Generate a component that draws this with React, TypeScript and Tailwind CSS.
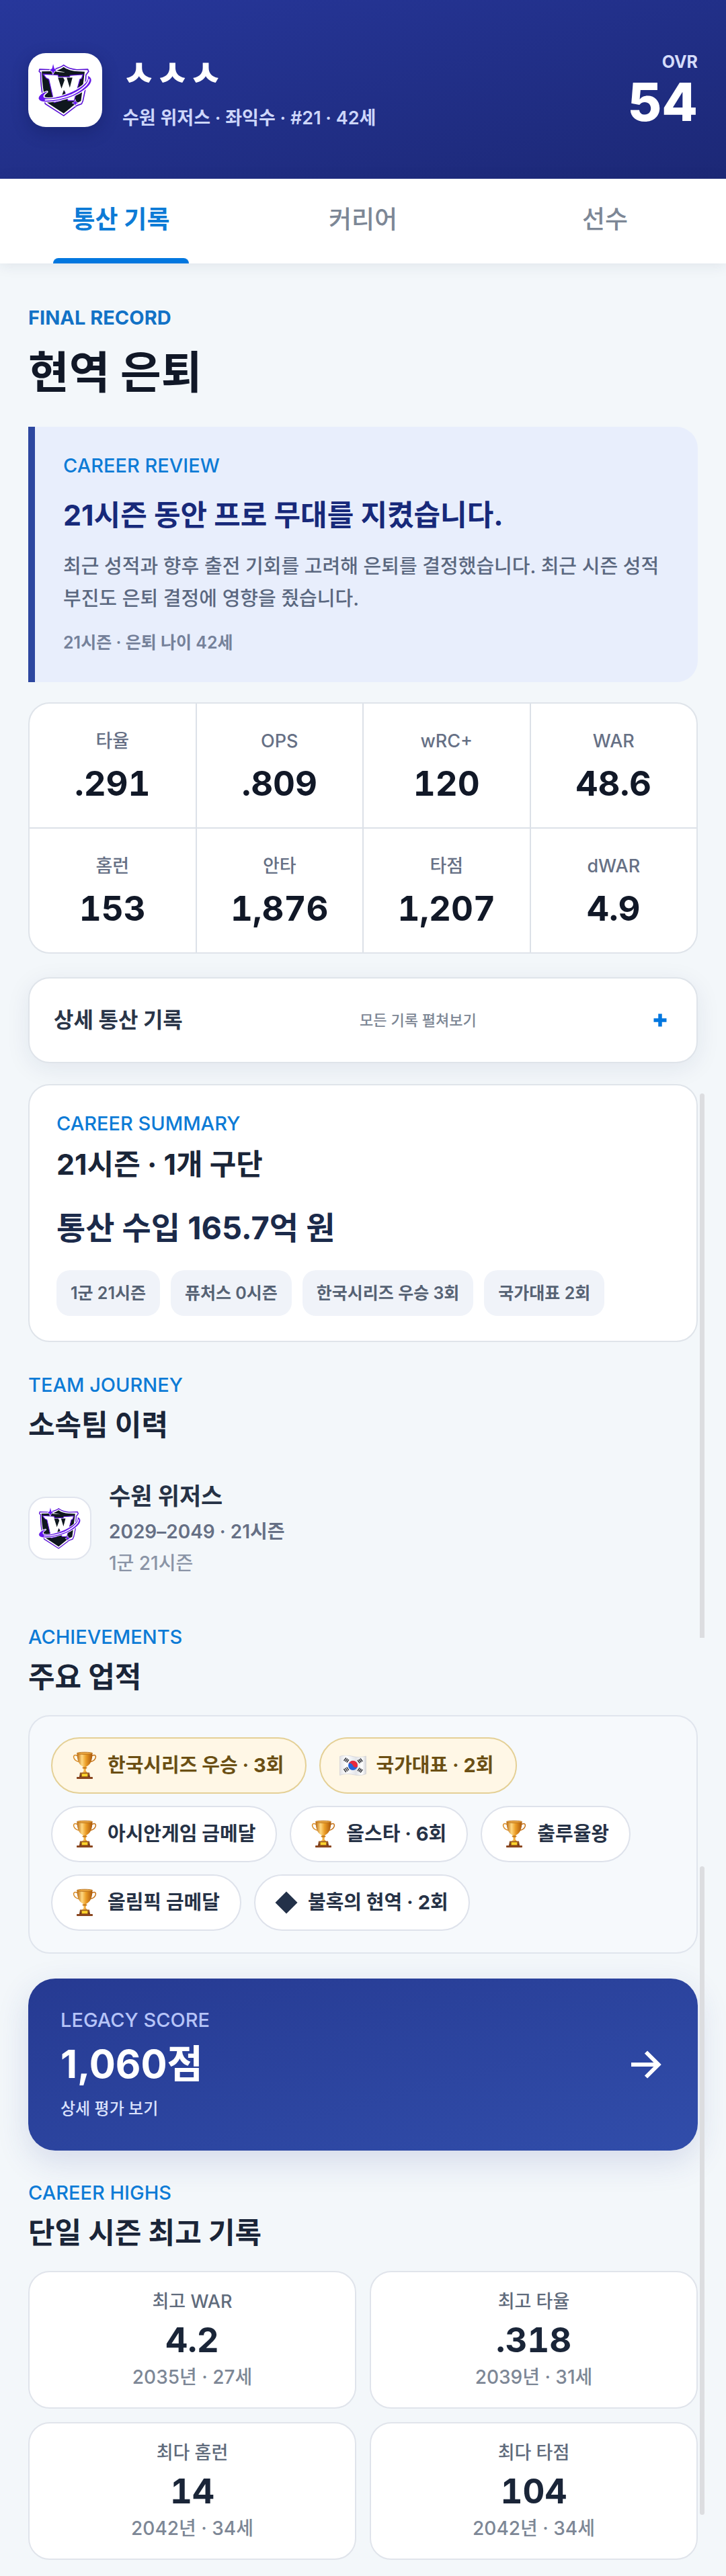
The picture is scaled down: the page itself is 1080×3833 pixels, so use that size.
import React from "react";

type Stat = { label: string; value: string };

const careerStats: Stat[] = [
  { label: "타율", value: ".291" },
  { label: "OPS", value: ".809" },
  { label: "wRC+", value: "120" },
  { label: "WAR", value: "48.6" },
  { label: "홈런", value: "153" },
  { label: "안타", value: "1,876" },
  { label: "타점", value: "1,207" },
  { label: "dWAR", value: "4.9" },
];

const summaryChips = ["1군 21시즌", "퓨처스 0시즌", "한국시리즈 우승 3회", "국가대표 2회"];

const careerHighs = [
  { label: "최고 WAR", value: "4.2", when: "2035년 · 27세" },
  { label: "최고 타율", value: ".318", when: "2039년 · 31세" },
  { label: "최다 홈런", value: "14", when: "2042년 · 34세" },
  { label: "최다 타점", value: "104", when: "2042년 · 34세" },
];

const achievements: { icon: "trophy" | "flag" | "diamond"; text: string; gold?: boolean }[] = [
  { icon: "trophy", text: "한국시리즈 우승 · 3회", gold: true },
  { icon: "flag", text: "국가대표 · 2회", gold: true },
  { icon: "trophy", text: "아시안게임 금메달" },
  { icon: "trophy", text: "올스타 · 6회" },
  { icon: "trophy", text: "출루율왕" },
  { icon: "trophy", text: "올림픽 금메달" },
  { icon: "diamond", text: "불혹의 현역 · 2회" },
];

function TeamLogo({ className }: { className: string }) {
  const shield =
    "M202 77 C188 89 170 92 150 98 L92 96 L90 106 L97 112 C97 150 100 190 108 222 L118 254 L202 308 L262 262 L284 254 L290 240 L300 192 L304 122 L316 106 L312 96 L262 98 C240 96 216 88 202 77 Z";
  const sparkle = "M154 72 L159 93 L170 100 L159 106 L153 118 L149 106 L138 100 L149 93 Z";
  const orbit =
    "M314 128 C332 136 330 154 314 172 C284 204 222 232 160 240 C120 246 92 244 89 230 C88 218 104 205 126 199 C110 210 104 220 112 226 C132 236 190 224 240 201 C284 180 320 154 314 128 Z";
  return (
    <svg viewBox="80 66 258 250" className={className} role="img" aria-label="수원 위저스">
      <path d={shield} fill="#fff" stroke="#5a12d6" strokeWidth="5" strokeLinejoin="round" />
      <path
        d="M202 86 C184 99 168 103 152 105 L102 106 C104 150 106 186 117 226 L128 249 L202 298 L257 253 L281 241 L298 107 L258 105 C238 103 216 97 202 86 Z"
        fill="#0f171e"
      />
      <path
        d="M108 118 L176 122 L178 130 L228 130 L232 124 L290 120 L284 138 L276 142 L250 240 L222 240 L206 198 L190 240 L158 248 L134 142 L122 136 Z"
        fill="#fff"
        stroke="#5a12d6"
        strokeWidth="4"
        strokeLinejoin="round"
      />
      <path d="M176 134 L192 184 L206 146 L200 134 Z M216 134 L230 180 L242 134 Z" fill="#0f171e" />
      <path d="M203 190 L190 226 L217 224 Z" fill="#0f171e" />
      <path d={orbit} fill="none" stroke="#fff" strokeWidth="10" strokeLinejoin="round" />
      <path d={orbit} fill="#6414f0" stroke="#5a12d6" strokeWidth="2" strokeLinejoin="round" />
      <path d="M318 140 C318 162 286 190 240 212 C196 230 150 236 116 236" fill="none" stroke="#fff" strokeWidth="6" />
      <path d={sparkle} fill="#6414f0" stroke="#fff" strokeWidth="5" strokeLinejoin="round" />
      <path d={sparkle} fill="#6414f0" />
      <path d="M166 101 L212 110 L168 107 Z" fill="#fff" />
      <path d="M255 234 L259 245 L270 250 L259 255 L255 266 L251 255 L240 250 L251 245 Z" fill="#6414f0" stroke="#fff" strokeWidth="2" />
    </svg>
  );
}

function Trophy() {
  return (
    <svg viewBox="0 0 40 42" className="h-[42px] w-10 shrink-0" aria-hidden="true">
      <defs>
        <linearGradient id="cup" x1="0" x2="1" y1="0" y2="0">
          <stop offset="0" stopColor="#b9680f" />
          <stop offset="0.32" stopColor="#ffd983" />
          <stop offset="0.58" stopColor="#eb9d25" />
          <stop offset="1" stopColor="#a9560b" />
        </linearGradient>
        <linearGradient id="plinth" x1="0" x2="0" y1="0" y2="1">
          <stop offset="0" stopColor="#a3622c" />
          <stop offset="1" stopColor="#6d3417" />
        </linearGradient>
      </defs>
      <path d="M9 6.500C4 4 2.800 7 4 10 C5.500 13.500 8 15 12 15.500" fill="none" stroke="#d98d28" strokeWidth="1.600" />
      <path d="M31 6.500C36 4 37.200 7 36 10 C34.500 13.500 32 15 28 15.500" fill="none" stroke="#c57318" strokeWidth="1.600" />
      <path d="M8.500 2.500C8.500 14 12 20.500 18 23 L18.500 29 L15 33 H25 L21.500 29 L22 23 C28 20.500 31.500 14 31.500 2.500 Z" fill="url(#cup)" />
      <ellipse cx="20" cy="2.800" rx="11.500" ry="1.600" fill="#e9a640" stroke="#b36a14" strokeWidth="0.800" />
      <ellipse cx="20" cy="24.500" rx="3.500" ry="1.200" fill="#c87917" />
      <path d="M13 31.500 H27 L28 38 H12 Z" fill="url(#plinth)" />
      <rect x="8" y="38" width="24" height="3" rx="0.800" fill="#8a461f" />
      <rect x="15.500" y="33" width="9" height="4.500" fill="#ffd52e" stroke="#a36a10" strokeWidth="0.600" />
    </svg>
  );
}

function KoreaFlag() {
  return (
    <svg viewBox="0 0 40 30" className="h-[30px] w-10 shrink-0" aria-hidden="true">
      <defs>
        <linearGradient id="cloth" x1="0" x2="1" y1="0" y2="0">
          <stop offset="0" stopColor="#e2e2e6" />
          <stop offset="0.25" stopColor="#ffffff" />
          <stop offset="0.62" stopColor="#e3e4e8" />
          <stop offset="0.85" stopColor="#ffffff" />
          <stop offset="1" stopColor="#d3d4d8" />
        </linearGradient>
      </defs>
      <path d="M0.500 1.500 C8 -1 14 0 20 1.500 C27 3.200 33 3 39.500 1 V27.500 C33 30 27 30 20 28.500 C13 27 8 27 0.500 29.500 Z" fill="url(#cloth)" stroke="#c9cad0" strokeWidth="0.600" />
      <circle cx="20" cy="15" r="7" fill="#2464d8" />
      <path d="M13.700 12 A7 7 0 0 1 26.900 16.500 C25 19 21.500 18.200 20 15 C18.500 11.800 15.500 10.500 13.700 12 Z" fill="#e8283c" />
      <g stroke="#34363c" strokeWidth="1.500">
        <path d="M6.500 8 L10 3.500 M8.600 9.300 L12 4.800 M10.700 10.500 L13.800 6.300" />
        <path d="M6.500 20 L9.800 25 M8.600 18.600 L11.900 23.700 M10.700 17.400 L13.800 22.200" />
        <path d="M27 7 L30.300 11.500 M29 5.700 L32.300 10.300 M31 4.500 L34.300 9" />
        <path d="M27 23 L30.300 18.500 M29 24.300 L32.300 19.700 M31 25.500 L34.300 21" />
      </g>
    </svg>
  );
}

function Diamond() {
  return (
    <svg viewBox="0 0 36 36" className="h-9 w-9 shrink-0" aria-hidden="true">
      <path d="M18 1.500 L34.500 18 L18 34.500 L1.500 18 Z" fill="#233149" />
    </svg>
  );
}

function Eyebrow({ children }: { children: React.ReactNode }) {
  return <p className="text-[29px] leading-8 font-medium text-[#0d7bd6]">{children}</p>;
}

function SectionHeading({ eyebrow, title }: { eyebrow: string; title: string }) {
  return (
    <>
      <Eyebrow>{eyebrow}</Eyebrow>
      <h2 className="mt-[15px] text-[43px] leading-[56px] font-bold text-[#1a2538]">{title}</h2>
    </>
  );
}

export default function App() {
  return (
    <div className="relative w-full bg-[#f3f7fa] font-['Inter','Noto_Sans_CJK_KR',sans-serif] text-[#111827]">
      <header className="flex items-center bg-linear-to-br from-[#27379b] to-[#1c2876] px-[42px] pt-[72px] pb-[70px]">
        <div className="flex size-[110px] shrink-0 items-center justify-center rounded-[26px] bg-white shadow-[0_8px_24px_rgba(10,18,70,0.3)]">
          <TeamLogo className="size-[84px]" />
        </div>
        <div className="ml-[30px] min-w-0 flex-1 pt-1">
          <h1 className="text-[54px] leading-[68px] font-black text-white">ㅅㅅㅅ</h1>
          <p className="mt-3 text-[27px] leading-10 font-semibold text-[#cdd6fa]">수원 위저스 · 좌익수 · #21 · 42세</p>
        </div>
        <div className="text-right">
          <p className="text-[25px] leading-8 font-bold text-[#d5dcfa]">OVR</p>
          <p className="mt-1 text-[78px] leading-[80px] font-extrabold text-white">54</p>
        </div>
      </header>

      <div role="tablist" className="relative grid h-[126px] grid-cols-3 bg-white shadow-[0_2px_20px_rgba(30,50,80,0.1)]">
        <button type="button" role="tab" aria-selected="true" className="flex flex-col items-center">
          <span className="flex flex-1 items-center pt-1 text-[37px] font-bold text-[#0d7bd6]">통산 기록</span>
          <span className="h-2 w-[202px] rounded-t-lg bg-[#0277df]" />
        </button>
        <button type="button" role="tab" aria-selected="false" className="pb-1 text-[37px] font-medium text-[#7d8796]">
          커리어
        </button>
        <button type="button" role="tab" aria-selected="false" className="pb-1 text-[37px] font-medium text-[#7d8796]">
          선수
        </button>
      </div>

      <main className="px-[42px] pt-[65px] pb-6">
        <p className="text-[29px] leading-8 font-bold text-[#1272c6]">FINAL RECORD</p>
        <h2 className="mt-[29px] text-[66px] leading-[72px] font-bold text-[#111827]">현역 은퇴</h2>

        <section className="mt-[45px] rounded-r-[32px] border-l-10 border-[#2d47a0] bg-[#e8eefc] px-[42px] pt-[42px] pb-[43px]">
          <Eyebrow>CAREER REVIEW</Eyebrow>
          <h3 className="mt-[29px] text-[43px] leading-[56px] font-bold text-[#17297a]">21시즌 동안 프로 무대를 지켰습니다.</h3>
          <p className="mt-[25px] text-[29px] leading-[48px] font-medium text-[#5b6880]">
            최근 성적과 향후 출전 기회를 고려해 은퇴를 결정했습니다. 최근 시즌 성적 부진도 은퇴 결정에 영향을 줬습니다.
          </p>
          <p className="mt-[25px] text-[25px] leading-8 font-semibold text-[#75819a]">21시즌 · 은퇴 나이 42세</p>
        </section>

        <dl className="mt-[30px] grid grid-cols-4 gap-[2px] overflow-hidden rounded-[32px] border-2 border-[#dfe4ea] bg-[#dce1e8]">
          {careerStats.map((s) => (
            <div key={s.label} className="bg-white pt-10 pb-[37px] text-center">
              <dt className="text-[27px] leading-8 font-medium text-[#667085]">{s.label}</dt>
              <dd className="mt-[19px] text-[51px] leading-[56px] font-bold tabular-nums text-[#111827]">{s.value}</dd>
            </div>
          ))}
        </dl>

        <button
          type="button"
          aria-expanded="false"
          className="mt-[35px] flex h-32 w-full items-center justify-between rounded-[32px] border-2 border-[#dfe4ea] bg-white pr-11 pl-9 shadow-[0_8px_36px_rgba(30,41,90,0.08)]"
        >
          <span className="text-[32px] leading-10 font-bold text-[#2a3548]">상세 통산 기록</span>
          <span className="text-[22px] leading-8 font-medium text-[#7d8795]">모든 기록 펼쳐보기</span>
          <svg viewBox="0 0 20 20" className="size-5" aria-hidden="true">
            <path d="M10 0.500 V19.500 M0.500 10 H19.500" stroke="#0277df" strokeWidth="5.500" />
          </svg>
        </button>

        <section className="mt-[31px] rounded-[32px] border-2 border-[#dfe4ea] bg-white px-10 pt-[41px] pb-[37px]">
          <Eyebrow>CAREER SUMMARY</Eyebrow>
          <h3 className="mt-4 text-[43px] leading-[56px] font-bold text-[#1a2538]">21시즌 · 1개 구단</h3>
          <p className="mt-[35px] text-[47px] leading-[64px] font-bold text-[#1b2a4a]">통산 수입 165.7억 원</p>
          <ul className="mt-[31px] flex flex-wrap gap-4">
            {summaryChips.map((c) => (
              <li key={c} className="rounded-[20px] bg-[#f0f3f9] px-[21px] py-[18px] text-[25px] leading-8 font-semibold text-[#566274]">
                {c}
              </li>
            ))}
          </ul>
        </section>

        <section className="mt-12">
          <SectionHeading eyebrow="TEAM JOURNEY" title="소속팀 이력" />
          <div className="mt-[54px] flex items-center gap-[26px]">
            <div className="flex size-[94px] shrink-0 items-center justify-center rounded-[26px] border-2 border-[#e1e5ee] bg-white">
              <TeamLogo className="size-[66px]" />
            </div>
            <div>
              <p className="text-[35px] leading-[48px] font-bold text-[#263246]">수원 위저스</p>
              <p className="mt-[9px] text-[28px] leading-10 font-semibold text-[#667085]">2029–2049 · 21시즌</p>
              <p className="mt-[7px] text-[28px] leading-10 font-medium text-[#8a94a6]">1군 21시즌</p>
            </div>
          </div>
        </section>

        <section className="mt-[74px]">
          <SectionHeading eyebrow="ACHIEVEMENTS" title="주요 업적" />
          <ul className="mt-[29px] flex flex-wrap gap-x-[19px] gap-y-[18px] rounded-[32px] border-2 border-[#e0e5ed] bg-[#f6f9fc] px-8 pt-[31px] pb-8">
            {achievements.map((a) => (
              <li
                key={a.text}
                className={
                  a.gold
                    ? "flex h-[84px] items-center gap-3.5 rounded-full border-2 border-[#e4d096] bg-[#fff7e6] pr-8 pl-7 text-[29px] leading-10 font-bold text-[#6b4f14]"
                    : "flex h-[84px] items-center gap-3.5 rounded-full border-2 border-[#dee2eb] bg-white pr-[30px] pl-7 text-[29px] leading-10 font-bold text-[#263246]"
                }
              >
                {a.icon === "trophy" ? <Trophy /> : a.icon === "flag" ? <KoreaFlag /> : <Diamond />}
                {a.text}
              </li>
            ))}
          </ul>
        </section>

        <a
          href="#legacy"
          className="mt-[37px] flex h-64 items-center justify-between rounded-[40px] bg-linear-to-br from-[#263a92] to-[#314daa] pr-[53px] pl-12 shadow-[0_16px_48px_rgba(38,58,146,0.15)]"
        >
          <span className="flex flex-col">
            <span className="text-[29px] leading-8 font-medium text-[#b6c4f8]">LEGACY SCORE</span>
            <span className="mt-[13px] text-[58px] leading-[72px] font-bold text-white">1,060점</span>
            <span className="mt-[15px] text-[24px] leading-8 font-medium text-[#dbe2fc]">상세 평가 보기</span>
          </span>
          <svg viewBox="0 0 46 42" className="h-[42px] w-[46px]" fill="none" stroke="#fff" strokeWidth="6" aria-hidden="true">
            <path d="M0 21 H40 M22 2.500 L40.500 21 L22 39.500" />
          </svg>
        </a>

        <section className="mt-[47px]">
          <SectionHeading eyebrow="CAREER HIGHS" title="단일 시즌 최고 기록" />
          <dl className="mt-[29px] grid grid-cols-2 gap-5">
            {careerHighs.map((h) => (
              <div key={h.label} className="rounded-[32px] border-2 border-[#e0e4eb] bg-white pt-7 pb-[25px] text-center">
                <dt className="text-[27px] leading-8 font-medium text-[#5f6b7c]">{h.label}</dt>
                <dd className="mt-[13px] text-[51px] leading-[56px] font-bold tabular-nums text-[#1a2538]">{h.value}</dd>
                <dd className="mt-[7px] text-[28px] leading-10 font-medium text-[#7d8796]">{h.when}</dd>
              </div>
            ))}
          </dl>
        </section>
      </main>

      <div aria-hidden="true" className="absolute top-[1627px] right-8 h-[810px] w-[7px] rounded-t-full bg-[#dcdde0]" />
      <div aria-hidden="true" className="absolute top-[2777px] right-8 h-[965px] w-[7px] rounded-full bg-[#dcdde0]" />
    </div>
  );
}
